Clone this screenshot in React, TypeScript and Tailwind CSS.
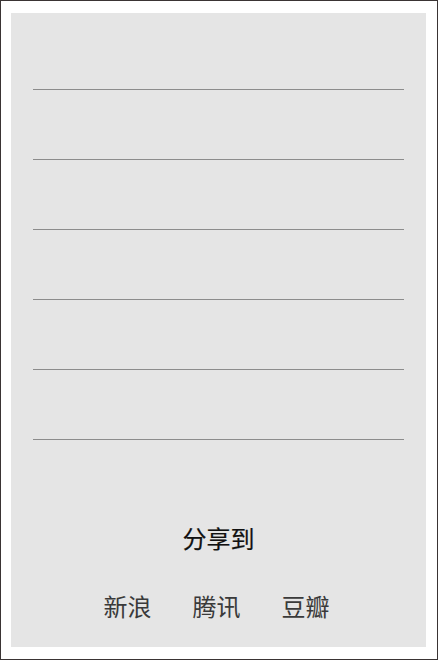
import React from 'react';

const cjk = { fontFamily: '"Noto Sans CJK SC", "Noto Sans", sans-serif' };

export default function App() {
  const rows = [0, 1, 2, 3, 4, 5];
  const targets = ['新浪', '腾讯', '豆瓣'];

  return (
    <div className="w-[438px] h-[660px] border border-[#3a3434] bg-white pl-[10px] pt-[12px] pr-[11px] pb-[12px]" style={cjk}>
      <div className="w-full h-full bg-[#e5e5e5] pt-[7px] px-[22px] flex flex-col">
        {rows.map((r) => (
          <div key={r} className="h-[70px] border-b border-[#8c8c8c] shrink-0" />
        ))}
        <div className="mt-[86px] text-center text-[24px] leading-none font-normal text-[#111] [-webkit-text-stroke:0.2px_#111]">分享到</div>
        <div className="mt-[44px] flex justify-center gap-[41px] pr-[4px] text-[24px] leading-none text-[#3a3a3a]">
          {targets.map((t) => (
            <span key={t}>{t}</span>
          ))}
        </div>
      </div>
    </div>
  );
}
